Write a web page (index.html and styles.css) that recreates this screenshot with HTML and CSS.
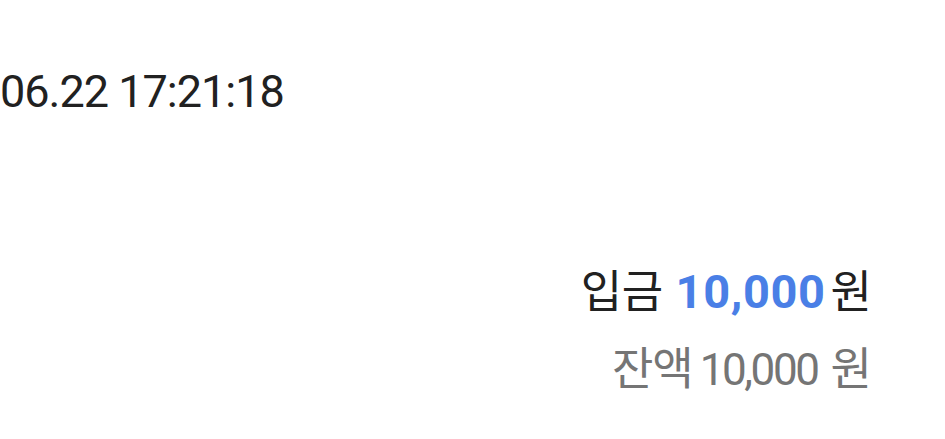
FILE: index.html
```html
<!DOCTYPE html>
<html lang="ko">
<head>
<meta charset="utf-8">
<link rel="stylesheet" href="styles.css">
</head>
<body>
<div class="page">
  <div class="date">06.22 17:21:18</div>
  <div class="amounts">
    <div class="row deposit"><span class="label">입금</span><span class="value">10,000</span><span class="unit">원</span></div>
    <div class="row balance"><span class="label">잔액</span><span class="num">10,000</span><span class="unit">원</span></div>
  </div>
</div>
</body>
</html>
```
FILE: styles.css
```css
html, body {
  margin: 0;
  padding: 0;
  background: #ffffff;
}
.page {
  width: 945px;
  height: 439px;
  font-family: Roboto, "Noto Sans CJK KR", sans-serif;
  display: flex;
  flex-direction: column;
}
.date {
  margin-top: 62px;
  font-size: 45px;
  line-height: 60px;
  letter-spacing: -1px;
  color: #212121;
  white-space: nowrap;
}
.amounts {
  margin-top: 142px;
  padding-right: 73px;
  display: flex;
  flex-direction: column;
  align-items: flex-end;
}
.row {
  display: flex;
  align-items: baseline;
  font-size: 45px;
  line-height: 56px;
  white-space: nowrap;
}
.deposit {
  color: #212121;
}
.deposit .label {
  margin-right: 13px;
  letter-spacing: -0.5px;
}
.deposit .value {
  color: #4a7fe6;
  font-size: 47px;
  font-weight: 700;
  letter-spacing: 0.6px;
  margin-right: 5px;
}
.balance {
  margin-top: 21px;
  color: #757575;
}
.balance .label {
  margin-right: 7px;
  letter-spacing: -1px;
}
.balance .num {
  font-size: 44px;
  letter-spacing: -2.4px;
  margin-right: 13px;
}
```
